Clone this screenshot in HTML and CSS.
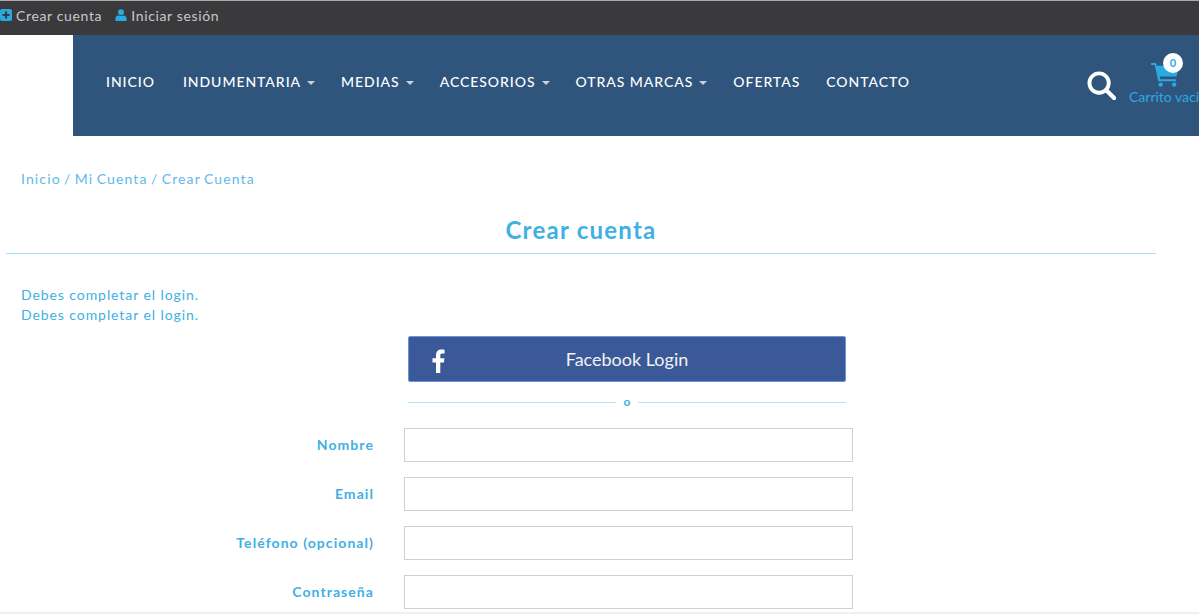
FILE: index.html
```html
<!DOCTYPE html>
<html lang="es">
<head>
	<meta charset="UTF-8">
	<title>Crear cuenta</title>
	<link rel="stylesheet" href="styles.css">
</head>
<body>
	<div class="topbar">
		<a class="topLink" href="#">
			<svg class="topIcon" viewBox="0 0 12 12"><rect width="12" height="12" rx="2" fill="#29abe2"/><path d="M6 2.5v7M2.5 6h7" stroke="#3a3a3d" stroke-width="2.2"/></svg>
			Crear cuenta
		</a>
		<a class="topLink" href="#">
			<svg class="topIcon" viewBox="0 0 12 12"><circle cx="6" cy="3.2" r="3" fill="#29abe2"/><path d="M0.5 12V9.2C0.5 7.5 2 6.6 3.5 6.2 5 7.4 7 7.4 8.5 6.2 10 6.6 11.5 7.5 11.5 9.2V12Z" fill="#29abe2"/></svg>
			Iniciar sesión
		</a>
	</div>

	<header class="header">
		<ul class="nav">
			<li>INICIO</li>
			<li>INDUMENTARIA<span class="caret"></span></li>
			<li>MEDIAS<span class="caret"></span></li>
			<li>ACCESORIOS<span class="caret"></span></li>
			<li>OTRAS MARCAS<span class="caret"></span></li>
			<li>OFERTAS</li>
			<li>CONTACTO</li>
		</ul>
		<svg class="searchIcon" viewBox="0 0 30 30"><circle cx="12.5" cy="12.5" r="10" fill="none" stroke="#fff" stroke-width="4"/><path d="M20 20l8 8" stroke="#fff" stroke-width="4.4" stroke-linecap="round"/></svg>
		<div class="cart">
			<svg class="cartIcon" viewBox="0 0 30 26"><path d="M0 1h5l1 3h23l-2.500 11H9l.5 3H26v2H7.500L3.800 3H0Z" fill="#29abe2"/><circle cx="10" cy="23.500" r="2.300" fill="#29abe2"/><circle cx="24" cy="23.500" r="2.300" fill="#29abe2"/></svg>
			<span class="cartBadge">0</span>
			<span class="cartText">Carrito vacío</span>
		</div>
	</header>

	<main class="main">
		<p class="crumbs">Inicio / Mi Cuenta / Crear Cuenta</p>
		<h1 class="title">Crear cuenta</h1>
		<div class="msgs">
			<p>Debes completar el login.</p>
			<p>Debes completar el login.</p>
		</div>
		<div class="social">
			<a class="fbBtn" href="#">
				<svg class="fbIcon" viewBox="0 0 13 24"><path d="M4 24V13.500H0.500V9.300H4V6.300C4 2.500 6.200 0.500 9.400 0.500 10.900 0.500 12.200 0.600 12.600 0.700V4.500H10.400C8.600 4.500 8.300 5.300 8.300 6.600V9.300H12.400L11.900 13.500H8.300V24Z" fill="#fff"/></svg>
				Facebook Login
			</a>
			<div class="orLine"><span>o</span></div>
		</div>
		<form class="form">
			<div class="row"><label>Nombre</label><input type="text"></div>
			<div class="row"><label>Email</label><input type="text"></div>
			<div class="row"><label>Teléfono (opcional)</label><input type="text"></div>
			<div class="row"><label>Contraseña</label><input type="password"></div>
		</form>
	</main>
</body>
</html>
```

FILE: styles.css
```css
html{
	height:614px;
	overflow:hidden;
	background:#f0f0f0;
}
body{
	margin:0;
	height:612px;
	overflow:hidden;
	font-family:"Lato","Liberation Sans",sans-serif;
	background:#fff;
	color:#3fb0e4;
}
ul,li,p,h1{
	margin:0;
	padding:0;
	list-style:none;
}
a{
	text-decoration:none;
}
.topbar{
	display:flex;
	align-items:center;
	gap:13px;
	height:28px;
	padding-bottom:6px;
	background:#3a3a3d;
	border-top:1px solid #aaa;
}
.topLink{
	display:flex;
	align-items:center;
	gap:4px;
	color:#c8c8c8;
	font-size:14px;
	letter-spacing:.65px;
}
.topIcon{
	width:12px;
	height:12px;
}
.header{
	position:relative;
	display:flex;
	align-items:center;
	height:101px;
	margin-left:73px;
	background:#2f557d;
}
.nav{
	display:flex;
	gap:26px;
	padding:0 0 9px 33px;
	color:#fff;
	font-size:14px;
	font-weight:500;
	letter-spacing:.95px;
}
.nav li:first-child{
	padding-right:2px;
}
.caret{
	display:inline-block;
	margin-left:6px;
	vertical-align:middle;
	border-top:4px solid #c9d2dc;
	border-left:4px solid transparent;
	border-right:4px solid transparent;
}
.searchIcon{
	position:absolute;
	left:1014px;
	top:36px;
	width:29px;
	height:29px;
}
.cart{
	position:absolute;
	left:1056px;
	top:16px;
	width:70px;
	height:60px;
	overflow:hidden;
}
.cartIcon{
	position:absolute;
	left:22px;
	top:11px;
	width:29px;
	height:25px;
}
.cartBadge{
	position:absolute;
	left:34px;
	top:2px;
	width:20px;
	height:20px;
	border-radius:50%;
	background:#fff;
	color:#29abe2;
	font-size:11px;
	font-weight:700;
	line-height:20px;
	text-align:center;
}
.cartText{
	position:absolute;
	left:0;
	top:37px;
	color:#29abe2;
	font-size:14px;
	white-space:nowrap;
}
.main{
	padding:0 43px 0 6px;
}
.crumbs{
	padding:34px 0 0 15px;
	font-size:14px;
	line-height:18px;
	letter-spacing:1.12px;
	word-spacing:-1.35px;
	color:#62b9e8;
}
.title{
	margin-top:26px;
	padding-bottom:7px;
	border-bottom:1px solid #a0e0fa;
	font-size:24px;
	font-weight:700;
	line-height:32px;
	letter-spacing:1.25px;
	text-align:center;
}
.msgs{
	padding:31px 0 0 15px;
	font-size:14px;
	line-height:20px;
	letter-spacing:.92px;
}
.social{
	width:438px;
	margin:11px 0 0 402px;
}
.fbBtn{
	position:relative;
	display:block;
	height:44px;
	border:1px solid #6a93de;
	border-radius:2px;
	background:#3b5998;
	color:#f2f2f2;
	font-size:18px;
	line-height:44px;
	text-align:center;
}
.fbIcon{
	position:absolute;
	left:23px;
	top:12px;
	width:13px;
	height:24px;
}
.orLine{
	display:flex;
	align-items:center;
	gap:8px;
	margin-top:10px;
	font-size:12px;
	font-weight:700;
	line-height:20px;
}
.orLine:before,.orLine:after{
	content:'';
	flex:1;
	border-top:1px solid #b5e6f8;
}
.form{
	margin-top:16px;
}
.row{
	display:flex;
	align-items:center;
	margin-bottom:15px;
}
.row label{
	width:368px;
	padding-bottom:2px;
	font-size:14px;
	font-weight:700;
	letter-spacing:1.07px;
	text-align:right;
}
.row input{
	box-sizing:border-box;
	width:449px;
	height:34px;
	margin-left:30px;
	border:1px solid #d0d0d0;
	background:#fff;
}
```
